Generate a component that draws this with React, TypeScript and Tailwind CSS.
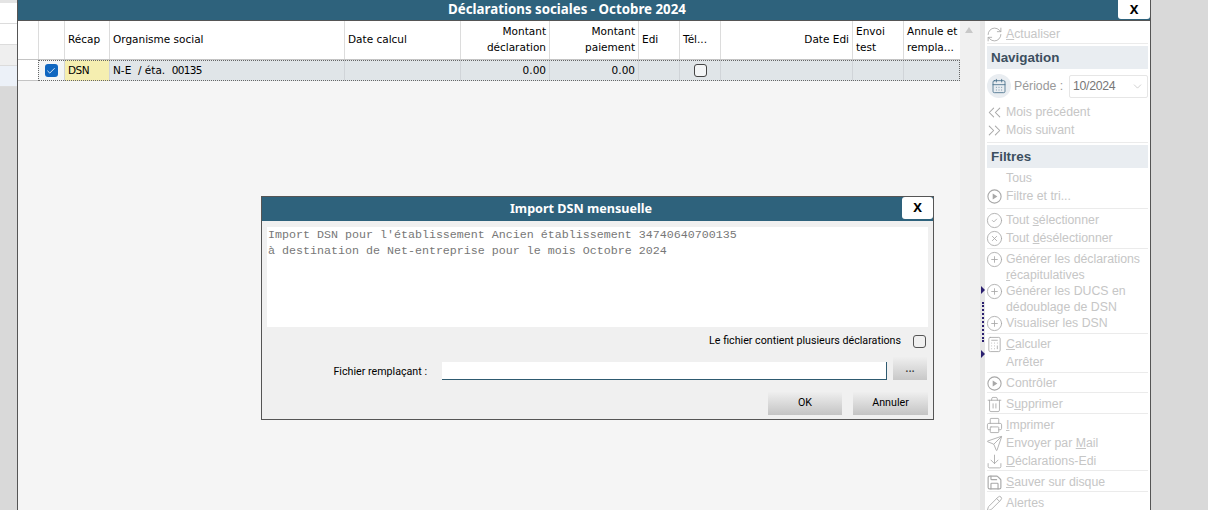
import React from "react";
import {
  RefreshCw,
  CalendarDays,
  ChevronsLeft,
  ChevronsRight,
  ChevronDown,
  CircleCheck,
  CircleX,
  CirclePlus,
  Calculator,
  Trash2,
  Printer,
  Send,
  Download,
  Save,
  Pencil,
  Check,
} from "lucide-react";

const grid = "font-['DejaVu_Sans',sans-serif]";
const ui = "font-['Liberation_Sans',sans-serif]";
const dlg = "font-['Roboto',sans-serif] text-[10.7px] text-black";

function HeaderCell({ w, right, children }: { w: string; right?: boolean; children?: React.ReactNode }) {
  return (
    <div className={`${w} shrink-0 h-full flex items-center border-r border-[#dcdcdc] px-[3px] pb-[2px] leading-4 ${right ? "justify-end text-right" : ""}`}>
      <span>{children}</span>
    </div>
  );
}

function RowCell({ w, right, className, children }: { w: string; right?: boolean; className?: string; children?: React.ReactNode }) {
  return (
    <div className={`${w} shrink-0 h-full flex items-center border-r border-[#d0d4d8] px-[3px] ${right ? "justify-end" : ""} ${className ?? ""}`}>
      {children}
    </div>
  );
}

function Sep({ className }: { className?: string }) {
  return <div className={`h-px shrink-0 bg-[#ebebeb] ${className ?? ""}`} />;
}

function Section({ children }: { children: React.ReactNode }) {
  return <div className="h-[23px] shrink-0 bg-[#e9edf1] flex items-center pl-[4px] pt-[2px] text-[13.4px] font-bold text-[#3c4f60]">{children}</div>;
}

function Action({ icon, className, children }: { icon?: React.ReactNode; className?: string; children: React.ReactNode }) {
  return (
    <div className={`flex shrink-0 ${className ?? "h-[18px]"}`}>
      <div className="w-[15px] h-[18px] flex items-center justify-center shrink-0 text-[#a8a8a8]">{icon}</div>
      <div className="text-[12.3px] leading-[16px] pl-[4px] pt-px text-[#c6c6c6] whitespace-nowrap">{children}</div>
    </div>
  );
}

const icon = { size: 17, strokeWidth: 1.2 };

function PlayIcon() {
  return (
    <svg width="17" height="17" viewBox="0 0 17 17" fill="none" className="shrink-0">
      <circle cx="8.5" cy="8.5" r="6.6" stroke="currentColor" strokeWidth="1.1" />
      <polygon points="6.7,5.6 11.4,8.5 6.7,11.4" fill="currentColor" />
    </svg>
  );
}

function Sidebar() {
  return (
    <div className={`w-[165px] shrink-0 bg-white px-[2px] pt-[4px] flex flex-col overflow-hidden ${ui}`}>
      <Action icon={<RefreshCw {...icon} className="shrink-0" />}><u>A</u>ctualiser</Action>
      <Sep className="mb-[2px]" />
      <Section>Navigation</Section>
      <div className="flex items-center h-[24px] mt-[5px] shrink-0">
        <div className="w-[24px] h-[24px] rounded-full bg-[#e9edf1] flex items-center justify-center text-[#3f6a85]">
          <CalendarDays size={16} strokeWidth={1.2} />
        </div>
        <span className="ml-[3px] w-[55px] text-[12.3px] text-[#9a9a9a]">Période :</span>
        <div className="w-[79px] h-[23px] border border-[#e6e6e6] rounded-[2px] flex items-center justify-between pl-[3px] pr-[3px] text-[12.3px] tracking-[-0.3px] text-[#777]">
          10/2024
          <ChevronDown size={13} strokeWidth={1} className="text-[#aaa]" />
        </div>
      </div>
      <Action className="h-[18px] mt-[5px]" icon={<ChevronsLeft size={21} strokeWidth={1.2} className="shrink-0" />}>Mois précédent</Action>
      <Action icon={<ChevronsRight size={21} strokeWidth={1.2} className="shrink-0" />}>Mois suivant</Action>
      <Sep className="mt-[3px] mb-[2px]" />
      <Section>Filtres</Section>
      <Action className="h-[18px] mt-px">Tous</Action>
      <Action icon={<PlayIcon />}>Filtre et tri...</Action>
      <Sep className="mt-[3px] mb-[2px]" />
      <Action icon={<CircleCheck {...icon} className="shrink-0" />}>Tout <u>s</u>électionner</Action>
      <Action icon={<CircleX {...icon} className="shrink-0" />}>Tout <u>d</u>ésélectionner</Action>
      <Sep className="mt-px mb-px" />
      <Action className="h-[32px]" icon={<CirclePlus {...icon} className="shrink-0" />}>Générer les déclarations<br /><u>r</u>écapitulatives</Action>
      <Action className="h-[32px]" icon={<CirclePlus {...icon} className="shrink-0" />}>Générer les DUCS en<br />dédoublage de DSN</Action>
      <Action icon={<CirclePlus {...icon} className="shrink-0" />}>Visualiser les DSN</Action>
      <Sep className="mt-px mb-px" />
      <Action icon={<Calculator {...icon} className="shrink-0" />}><u>C</u>alculer</Action>
      <Action>Arrêter</Action>
      <Sep className="mt-px mb-px" />
      <Action icon={<PlayIcon />}>Contrôler</Action>
      <Sep className="mb-[2px]" />
      <Action icon={<Trash2 {...icon} className="shrink-0" />}>S<u>u</u>pprimer</Action>
      <Sep className="mb-[2px]" />
      <Action icon={<Printer {...icon} className="shrink-0" />}><u>I</u>mprimer</Action>
      <Action icon={<Send {...icon} className="shrink-0" />}>Envoyer par <u>M</u>ail</Action>
      <Action icon={<Download {...icon} className="shrink-0" />}><u>D</u>éclarations-Edi</Action>
      <Sep className="mb-[2px]" />
      <Action icon={<Save size={17} strokeWidth={1.6} className="shrink-0" />}><u>S</u>auver sur disque</Action>
      <Sep className="mb-[2px]" />
      <Action icon={<Pencil {...icon} className="shrink-0" />}>Alertes</Action>
    </div>
  );
}

function Table() {
  return (
    <div className="flex-1 min-w-0 flex flex-col bg-[#f5f5f5]">
      <div className={`h-[39px] shrink-0 bg-white flex text-[10.5px] text-black border-b border-[#c4c4c4] ${grid}`}>
        <HeaderCell w="w-[21px]" />
        <HeaderCell w="w-[26px]" />
        <HeaderCell w="w-[45px]">Récap</HeaderCell>
        <HeaderCell w="w-[235px]">Organisme social</HeaderCell>
        <HeaderCell w="w-[116px]">Date calcul</HeaderCell>
        <HeaderCell w="w-[89px]" right>Montant<br />déclaration</HeaderCell>
        <HeaderCell w="w-[89px]" right>Montant<br />paiement</HeaderCell>
        <HeaderCell w="w-[41px]">Edi</HeaderCell>
        <HeaderCell w="w-[41px]">Tél...</HeaderCell>
        <HeaderCell w="w-[132px]" right>Date Edi</HeaderCell>
        <HeaderCell w="w-[51px]">Envoi<br />test</HeaderCell>
        <div className="flex-1 min-w-0 px-[3px] pb-[2px] flex items-center leading-4 whitespace-nowrap overflow-hidden">
          <span>Annule et<br />rempla...</span>
        </div>
      </div>
      <div className={`h-[21px] shrink-0 flex text-[10.5px] text-black ${grid}`}>
        <div className="w-[20px] shrink-0 h-full bg-white border-b border-[#c4c4c4]" />
        <div className="flex-1 min-w-0 flex h-full bg-[#e0e5e8] outline-1 outline-dotted outline-[#666] -outline-offset-1">
          <RowCell w="w-[27px]" className="justify-center bg-[#f3f5f6] !px-0">
            <div className="w-[13px] h-[13px] rounded-[3px] bg-[#0f66c0] flex items-center justify-center">
              <Check size={10} color="white" strokeWidth={2} />
            </div>
          </RowCell>
          <RowCell w="w-[45px]" className="bg-[#f5eeb0]"><span className="tracking-[-0.5px]">DSN</span></RowCell>
          <RowCell w="w-[235px]">
            <span className="whitespace-pre">N-E  / éta.  <span className="tracking-[-0.7px]">00135</span></span>
          </RowCell>
          <RowCell w="w-[116px]" />
          <RowCell w="w-[89px]" right>0.00</RowCell>
          <RowCell w="w-[89px]" right>0.00</RowCell>
          <RowCell w="w-[41px]" />
          <RowCell w="w-[41px]" className="justify-center !px-0">
            <div className="w-[13px] h-[13px] rounded-[3px] border border-[#444] bg-[#f3f5f6]" />
          </RowCell>
          <RowCell w="w-[132px]" />
          <RowCell w="w-[51px]" />
        </div>
      </div>
    </div>
  );
}

function Dialog() {
  return (
    <div className="absolute left-[261px] top-[196px] w-[673px] h-[224px] border border-[#555] bg-[#f0f0f0] flex flex-col">
      <div className="relative h-[24px] shrink-0 bg-[#2e627c] flex items-center justify-center pr-[33px] text-white font-bold text-[12.6px] font-['Noto_Sans',sans-serif]">
        Import DSN mensuelle
        <div className="absolute right-0 top-0 w-[31px] h-[22px] bg-white rounded-[3px] text-black text-[13px] flex items-center justify-center">X</div>
      </div>
      <div className="flex flex-col px-[5px] pt-[6px]">
        <div className="h-[100px] bg-white px-[1px] font-['Liberation_Mono',monospace] text-[11.67px] leading-[16px] text-[#777]">
          Import DSN pour l'établissement Ancien établissement 34740640700135<br />
          à destination de Net-entreprise pour le mois Octobre 2024
        </div>
        <div className={`flex items-center justify-end h-[16px] mt-[6px] ${dlg}`}>
          Le fichier contient plusieurs déclarations
          <div className="w-[13px] h-[13px] ml-[12px] mr-[2px] rounded-[3px] border border-[#555]" />
        </div>
        <div className="flex items-end h-[24px] mt-[7px]">
          <span className={`w-[160px] text-right ${dlg}`}>Fichier remplaçant :</span>
          <div className="w-[445px] h-[18px] ml-[15px] bg-white border-b border-r border-[#2e5a70]" />
          <div className="w-[34px] h-[23px] ml-[6px] bg-gradient-to-b from-[#efefef] to-[#c8c8c8] flex items-center justify-center text-[12px] text-[#333] pb-[2px]">...</div>
        </div>
        <div className="flex justify-end gap-[11px] mt-[12px]">
          <div className={`w-[74px] h-[23px] bg-gradient-to-b from-[#efefef] to-[#c4c4c4] flex items-center justify-center ${dlg}`}>OK</div>
          <div className={`w-[75px] h-[23px] bg-gradient-to-b from-[#efefef] to-[#c4c4c4] flex items-center justify-center ${dlg}`}>Annuler</div>
        </div>
      </div>
    </div>
  );
}

export default function App() {
  return (
    <div className="relative w-[1208px] h-[510px] overflow-hidden flex bg-[#d9d9d9]">
      <div className="w-[17px] shrink-0 flex flex-col">
        <div className="h-[3px] bg-[#e4e4e4]" />
        <div className="h-[21px] bg-white border-b border-[#dcdcdc]" />
        <div className="h-[21px] bg-white border-b border-[#dcdcdc]" />
        <div className="h-[21px] bg-[#efefef] border-b border-[#dcdcdc]" />
        <div className="h-[21px] bg-[#ecf1f8] border-b border-[#dcdcdc]" />
      </div>

      <div className="w-[1134px] shrink-0 flex flex-col border-l border-r border-[#555]">
        <div className="relative h-[21px] shrink-0 bg-[#2e627c] border-b border-[#555] pr-[34px] text-white font-bold text-[13.3px] flex items-center justify-center font-['Noto_Sans',sans-serif]">
          Déclarations sociales - Octobre 2024
          <div className="absolute right-0 top-0 w-[32px] h-[19px] bg-white rounded-b-[3px] text-black text-[13px] flex items-center justify-center">X</div>
        </div>

        <div className="flex flex-1 min-h-0">
          <div className="w-[942px] shrink-0 flex"><Table /></div>
          <div className="w-[20px] shrink-0 bg-[#f0f0f0] flex justify-center pt-[6px] pr-[2px]">
            <svg width="8" height="6" viewBox="0 0 8 6" className="text-[#c8c8c8]">
              <polygon points="4,0 8,6 0,6" fill="currentColor" />
            </svg>
          </div>
          <div className="w-[5px] shrink-0 bg-[#e6e6e6] relative">
            <svg width="5" height="8" viewBox="0 0 5 8" className="absolute left-0 top-[265px]">
              <polygon points="1,0 5,4 1,8" fill="#2b2070" />
            </svg>
            <div className="absolute left-[2px] top-[281px] h-[40px] border-l-2 border-dotted border-[#2b2070]" />
            <svg width="5" height="8" viewBox="0 0 5 8" className="absolute left-0 top-[329px]">
              <polygon points="1,0 5,4 1,8" fill="#2b2070" />
            </svg>
          </div>
          <Sidebar />
        </div>
      </div>

      <Dialog />
    </div>
  );
}
